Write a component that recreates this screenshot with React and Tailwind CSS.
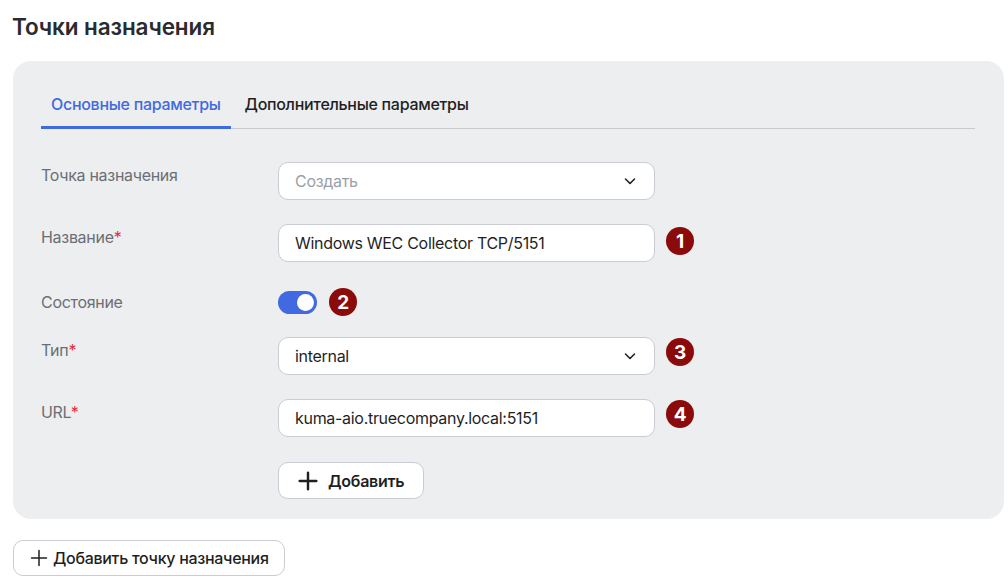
import React, { useState } from "react";

const Badge = ({ n }) => (
  <span className="w-7 h-7 rounded-full bg-[#8b0a0a] text-white text-[19px] font-bold flex items-center justify-center leading-none">
    {n}
  </span>
);

const Chevron = () => (
  <svg width="14" height="14" viewBox="0 0 14 14" fill="none">
    <path d="M2.5 5l4.5 4.5L11.5 5" stroke="#222" strokeWidth="1.6" strokeLinecap="round" strokeLinejoin="round" />
  </svg>
);

const Plus = ({ size = 18, w = 2 }) => (
  <svg width={size} height={size} viewBox="0 0 18 18" fill="none">
    <path d="M9 1.5v15M1.5 9h15" stroke="#1f1f1f" strokeWidth={w} strokeLinecap="round" />
  </svg>
);

const Label = ({ text, required }) => (
  <div className="w-[237px] shrink-0 pt-[1px] text-[16px] leading-6 text-[#6b6e74]">
    {text}
    {required && <span className="text-[#e0303a]">*</span>}
  </div>
);

const Field = ({ children, select }) => (
  <div className="w-[377px] h-[38px] bg-white border border-[#c9ccd2] rounded-[10px] flex items-center pl-4 pr-[17px] text-[16px] text-[#1f1f1f]">
    <div className="flex-1 truncate">{children}</div>
    {select && <Chevron />}
  </div>
);

export default function App() {
  const [tab, setTab] = useState(0);
  const [on, setOn] = useState(true);

  return (
    <div className="w-[1008px] h-[586px] bg-white font-['Inter',sans-serif] tracking-[-0.3px] overflow-hidden">
      <h1 className="pl-3 pt-[13px] text-[22.5px] leading-7 font-semibold tracking-[-0.1px] text-[#2a2b2e]">Точки назначения</h1>

      <div className="ml-[13px] mt-[20px] w-[991px] h-[458px] bg-[#edeef0] rounded-[18px] pl-[28px] pr-[29px] pt-[31px]">
        <div className="flex border-b border-[#c9cbd0] text-[16px] font-medium">
          <button
            onClick={() => setTab(0)}
            className={`px-[10px] pb-[10px] -mb-px border-b-[3px] ${tab === 0 ? "border-[#3f6ae0] text-[#3f6ae0]" : "border-transparent text-[#1f1f1f]"}`}
          >
            Основные параметры
          </button>
          <button
            onClick={() => setTab(1)}
            className={`ml-[4px] px-[10px] pb-[10px] -mb-px border-b-[3px] ${tab === 1 ? "border-[#3f6ae0] text-[#3f6ae0]" : "border-transparent text-[#1f1f1f]"}`}
          >
            Дополнительные параметры
          </button>
        </div>

        <div className="flex flex-col pt-[33px]">
          <div className="flex">
            <Label text="Точка назначения" />
            <Field select>
              <span className="text-[#9aa0a8]">Создать</span>
            </Field>
          </div>

          <div className="flex mt-[24px]">
            <Label text="Название" required />
            <Field>Windows WEC Collector TCP/5151</Field>
            <div className="ml-[11px] pt-[3px]">
              <Badge n="1" />
            </div>
          </div>

          <div className="flex mt-[26px] items-center">
            <div className="w-[237px] shrink-0 text-[16px] leading-6 text-[#6b6e74]">Состояние</div>
            <button
              onClick={() => setOn(!on)}
              className={`w-[39px] h-[23px] rounded-full p-[3px] flex ${on ? "bg-[#4169e1] justify-end" : "bg-[#b9bcc2] justify-start"}`}
            >
              <span className="w-[17px] h-[17px] rounded-full bg-white" />
            </button>
            <div className="ml-[12px]">
              <Badge n="2" />
            </div>
          </div>

          <div className="flex mt-[21px]">
            <Label text="Тип" required />
            <Field select>internal</Field>
            <div className="ml-[11px] pt-[1px]">
              <Badge n="3" />
            </div>
          </div>

          <div className="flex mt-[24px]">
            <Label text="URL" required />
            <Field>kuma-aio.truecompany.local:5151</Field>
            <div className="ml-[11px] pt-[1px]">
              <Badge n="4" />
            </div>
          </div>

          <div className="flex mt-[25px] pl-[237px]">
            <button className="h-[37px] px-[19px] bg-white border border-[#c9ccd2] rounded-[10px] flex items-center gap-[10px] text-[16px] font-semibold text-[#1f1f1f]">
              <Plus size={20} w={2.2} />
              Добавить
            </button>
          </div>
        </div>
      </div>

      <button className="ml-[13px] mt-[21px] h-[36px] pl-[16px] pr-[15px] bg-white border border-[#c9ccd2] rounded-[10px] flex items-center gap-[5px] text-[16px] font-medium text-[#1f1f1f]">
        <Plus size={18} w={1.5} />
        Добавить точку назначения
      </button>
    </div>
  );
}
